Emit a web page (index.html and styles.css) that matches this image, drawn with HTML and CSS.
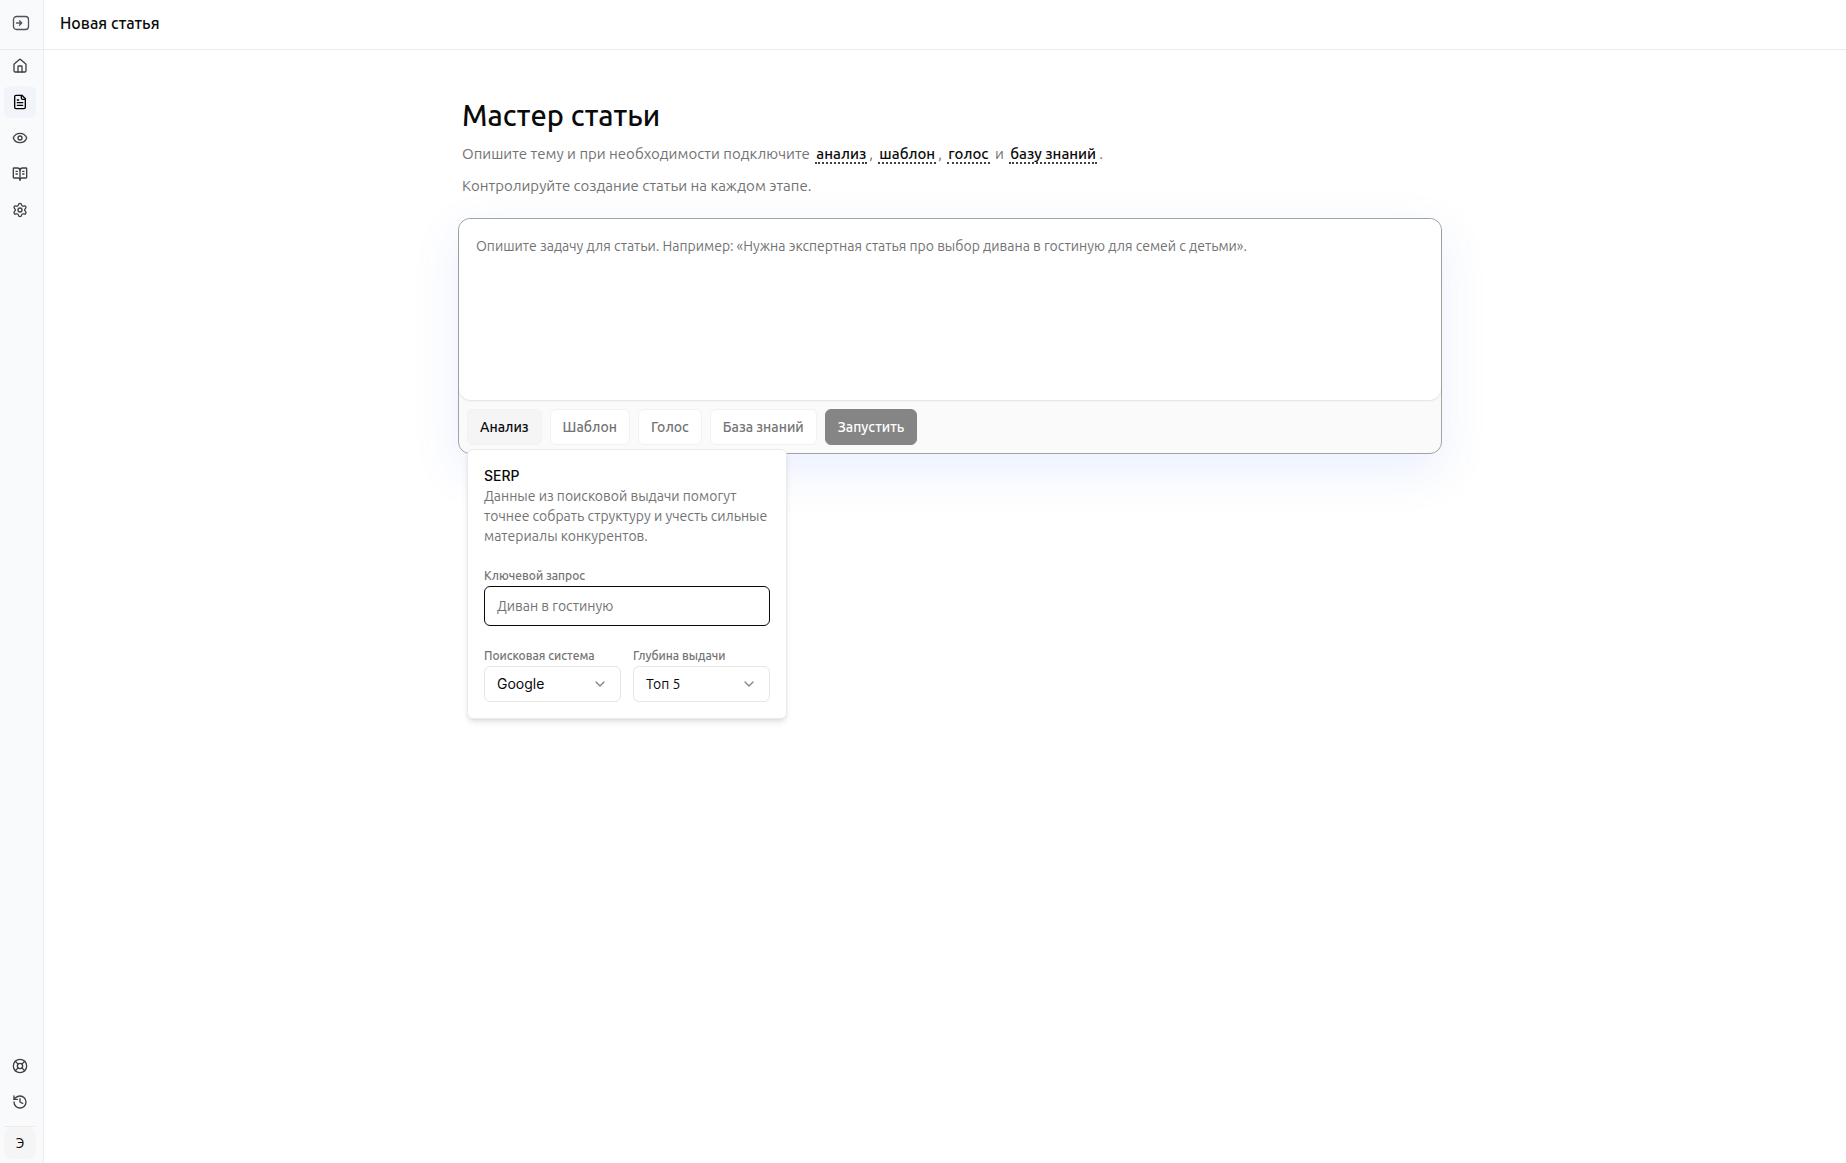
FILE: index.html
```html
<!DOCTYPE html>
<html lang="ru">
<head>
<meta charset="utf-8">
<meta name="viewport" content="width=device-width, initial-scale=1">
<title>Новая статья</title>
<link rel="stylesheet" href="styles.css">
</head>
<body>
<div class="app">
  <aside class="sidebar">
    <div class="sidebar-top">
      <button class="toggle" type="button" aria-label="Развернуть меню">
        <svg width="18" height="16" viewBox="0 0 18 16" stroke-width="1.3"><rect x="1.5" y="1.5" width="15" height="13" rx="3"/><path d="M4.5 8H9.5M7.5 5.8 9.7 8 7.5 10.2"/></svg>
      </button>
    </div>
    <nav class="nav" aria-label="Основное меню">
      <a class="nav-item" href="#" aria-label="Главная"><svg class="icon" viewBox="0 0 24 24"><path d="M15 21v-8a1 1 0 0 0-1-1h-4a1 1 0 0 0-1 1v8"/><path d="M3 10a2 2 0 0 1 .709-1.528l7-5.999a2 2 0 0 1 2.582 0l7 5.999A2 2 0 0 1 21 10v9a2 2 0 0 1-2 2H5a2 2 0 0 1-2-2z"/></svg></a>
      <a class="nav-item active" href="#" aria-label="Статьи" aria-current="page"><svg class="icon" viewBox="0 0 24 24"><path d="M15 2H6a2 2 0 0 0-2 2v16a2 2 0 0 0 2 2h12a2 2 0 0 0 2-2V7Z"/><path d="M14 2v4a2 2 0 0 0 2 2h4M10 9H8M16 13H8M16 17H8"/></svg></a>
      <a class="nav-item" href="#" aria-label="Просмотр"><svg class="icon" viewBox="0 0 24 24"><path d="M2.062 12.348a1 1 0 0 1 0-.696 10.75 10.75 0 0 1 19.876 0 1 1 0 0 1 0 .696 10.75 10.75 0 0 1-19.876 0"/><circle cx="12" cy="12" r="3"/></svg></a>
      <a class="nav-item" href="#" aria-label="База знаний"><svg class="icon" viewBox="0 0 24 24"><path d="M12 7v14M16 12h2M16 8h2M6 12h2M6 8h2"/><path d="M3 18a1 1 0 0 1-1-1V4a1 1 0 0 1 1-1h5a4 4 0 0 1 4 4 4 4 0 0 1 4-4h5a1 1 0 0 1 1 1v13a1 1 0 0 1-1 1h-6a3 3 0 0 0-3 3 3 3 0 0 0-3-3z"/></svg></a>
      <a class="nav-item" href="#" aria-label="Настройки"><svg class="icon" viewBox="0 0 24 24"><path d="M9.671 4.136a2.34 2.34 0 0 1 4.659 0 2.34 2.34 0 0 0 3.319 1.915 2.34 2.34 0 0 1 2.33 4.033 2.34 2.34 0 0 0 0 3.831 2.34 2.34 0 0 1-2.33 4.033 2.34 2.34 0 0 0-3.319 1.915 2.34 2.34 0 0 1-4.659 0 2.34 2.34 0 0 0-3.32-1.915 2.34 2.34 0 0 1-2.33-4.033 2.34 2.34 0 0 0 0-3.831A2.34 2.34 0 0 1 6.35 6.051a2.34 2.34 0 0 0 3.319-1.915"/><circle cx="12" cy="12" r="3"/></svg></a>
    </nav>
    <div class="nav nav-bottom">
      <a class="nav-item" href="#" aria-label="Поддержка"><svg class="icon" viewBox="0 0 24 24"><circle cx="12" cy="12" r="10"/><path d="m4.93 4.93 4.24 4.24M14.83 9.17l4.24-4.24M14.83 14.83l4.24 4.24M9.17 14.83l-4.24 4.24"/><circle cx="12" cy="12" r="4"/></svg></a>
      <a class="nav-item" href="#" aria-label="История"><svg class="icon" viewBox="0 0 24 24"><path d="M3 12a9 9 0 1 0 9-9 9.75 9.75 0 0 0-6.74 2.74L3 8"/><path d="M3 3v5h5M12 7v5l4 2"/></svg></a>
    </div>
    <div class="account"><button class="avatar" type="button">Э</button></div>
  </aside>

  <div class="page">
    <header class="topbar"><span class="topbar-title">Новая статья</span></header>
    <main class="main">
      <div class="wizard">
        <div class="intro">
          <h1>Мастер статьи</h1>
          <p>Опишите тему и при необходимости подключите <a class="term" href="#">анализ</a>, <a class="term" href="#">шаблон</a>, <a class="term" href="#">голос</a> и <a class="term" href="#">базу знаний</a>.</p>
          <p>Контролируйте создание статьи на каждом этапе.</p>
        </div>
        <form class="composer">
          <textarea class="prompt" aria-label="Задача для статьи" placeholder="Опишите задачу для статьи. Например: «Нужна экспертная статья про выбор дивана в гостиную для семей с детьми»."></textarea>
          <div class="actions">
            <div class="menu">
              <button class="chip chip-open" type="button" aria-expanded="true">Анализ</button>
              <section class="popover">
                <div class="popover-head">
                  <h2 class="latin">SERP</h2>
                  <p>Данные из поисковой выдачи помогут точнее собрать структуру и учесть сильные материалы конкурентов.</p>
                </div>
                <div class="field">
                  <label for="query">Ключевой запрос</label>
                  <input class="text-input" id="query" type="text" placeholder="Диван в гостиную">
                </div>
                <div class="field-row">
                  <div class="field">
                    <label for="engine">Поисковая система</label>
                    <div class="select">
                      <select class="latin" id="engine"><option>Google</option></select>
                      <svg class="icon chevron" viewBox="0 0 24 24"><path d="m6 9 6 6 6-6"/></svg>
                    </div>
                  </div>
                  <div class="field">
                    <label for="depth">Глубина выдачи</label>
                    <div class="select">
                      <select id="depth"><option>Топ 5</option></select>
                      <svg class="icon chevron" viewBox="0 0 24 24"><path d="m6 9 6 6 6-6"/></svg>
                    </div>
                  </div>
                </div>
              </section>
            </div>
            <button class="chip" type="button">Шаблон</button>
            <button class="chip" type="button">Голос</button>
            <button class="chip" type="button">База знаний</button>
            <button class="chip chip-run" type="submit" disabled>Запустить</button>
          </div>
        </form>
      </div>
    </main>
  </div>
</div>
</body>
</html>
```
FILE: styles.css
```css
:root {
  --text: #0a0a0a;
  --muted: #737373;
  --line: #e5e5e5;
  --font: Ubuntu, "Noto Sans", sans-serif;
}

* { box-sizing: border-box; }

body {
  margin: 0;
  font-family: var(--font);
  font-size: 14px;
  line-height: 20px;
  color: var(--text);
  background: #fff;
}

h1, h2, p { margin: 0; }

button, input, select, textarea { font: inherit; color: inherit; }

button { cursor: pointer; }

svg {
  display: block;
  fill: none;
  stroke: currentColor;
  stroke-linecap: round;
  stroke-linejoin: round;
}

.icon { width: 16px; height: 16px; stroke-width: 2; }

.latin { font-family: Inter, var(--font); }

.app { display: flex; min-height: 100vh; }

/* Sidebar */
.sidebar {
  position: sticky;
  top: 0;
  display: flex;
  flex-direction: column;
  flex: none;
  width: 44px;
  height: 100vh;
  background: #f8fafc;
  border-right: 1px solid #ebebeb;
}

.sidebar-top {
  display: flex;
  align-items: center;
  height: 50px;
  padding: 0 0 4px 12px;
  border-bottom: 1px solid #ebebeb;
}

.toggle {
  padding: 0;
  border: 0;
  background: none;
  color: #52525b;
}

.nav {
  display: flex;
  flex-direction: column;
  gap: 4px;
  padding: 0 4px;
}

.nav-bottom { margin-top: auto; padding-bottom: 8px; }

.nav-item {
  display: grid;
  place-items: center;
  width: 32px;
  height: 32px;
  border-radius: 6px;
  color: #3f3f46;
}

.nav-item.active { background: #f1f5f9; color: #000; }

.account {
  margin: 0 8px 4px 4px;
  border-top: 1px solid #ebebeb;
}

.avatar {
  display: block;
  width: 32px;
  height: 32px;
  padding: 0;
  border: 0;
  border-radius: 8px;
  background: #f5f5f5;
}

/* Page */
.page { display: flex; flex-direction: column; flex: 1; min-width: 0; }

.topbar {
  height: 50px;
  padding: 13px 16px;
  border-bottom: 1px solid #ebebeb;
}

.topbar-title { font-size: 16px; font-weight: 500; }

.main {
  display: flex;
  justify-content: center;
  padding: 48px 24px 48px 34px;
}

.wizard {
  display: flex;
  flex-direction: column;
  gap: 16px;
  width: 100%;
  max-width: 984px;
}

.intro { padding: 0 4px; }

.intro h1 {
  margin-bottom: 6px;
  font-size: 29px;
  font-weight: 500;
  line-height: 34px;
}

.intro p { font-size: 15px; line-height: 32px; color: var(--muted); }

.term {
  margin: 0 2px;
  padding: 0 1px;
  border-bottom: 2px dotted #404040;
  color: var(--text);
  font-weight: 500;
  text-decoration: none;
}

/* Composer */
.composer {
  border: 1px solid #a3a3a3;
  border-radius: 12px;
  background: #fafafa;
  box-shadow: 0 16px 48px rgba(37, 99, 235, 0.1);
}

.prompt {
  display: block;
  width: 100%;
  height: 181px;
  padding: 17px;
  border: 0;
  border-radius: 12px;
  outline: 0;
  background: #fff;
  box-shadow: 0 1px 2px rgba(0, 0, 0, 0.1);
  resize: none;
}

.prompt::placeholder, .text-input::placeholder { color: var(--muted); opacity: 1; }

.actions {
  display: flex;
  flex-wrap: wrap;
  gap: 8px;
  padding: 9px 8px 8px;
}

.chip {
  height: 36px;
  padding: 0 12px;
  border: 1px solid #f2f2f2;
  border-radius: 6px;
  background: #fff;
  color: var(--muted);
  font-weight: 500;
}

.chip-open { background: #f5f5f5; color: var(--text); }

.chip-run { border-color: #858585; background: #858585; color: #fff; }

/* Popover */
.menu { position: relative; }

.popover {
  position: absolute;
  top: calc(100% + 4px);
  left: 0;
  display: flex;
  flex-direction: column;
  gap: 20px;
  width: 320px;
  padding: 16px;
  border: 1px solid #ebebeb;
  border-radius: 6px;
  background: #fff;
  box-shadow: 0 4px 6px -1px rgba(0, 0, 0, 0.1), 0 2px 4px -2px rgba(0, 0, 0, 0.1);
}

.popover h2 { font-size: 14px; font-weight: 500; line-height: 20px; }

.popover p { color: var(--muted); }

.field { display: flex; flex-direction: column; min-width: 0; }

.field label { font-size: 12px; font-weight: 500; color: var(--muted); }

.field-row { display: grid; grid-template-columns: 1fr 1fr; gap: 12px; }

.text-input {
  width: 100%;
  height: 40px;
  padding: 0 12px;
  border: 1px solid var(--text);
  border-radius: 6px;
  outline: 0;
  background: #fff;
}

.select { display: grid; align-items: center; }

.select select, .chevron { grid-area: 1 / 1; }

.select select {
  width: 100%;
  height: 36px;
  padding: 0 36px 0 12px;
  border: 1px solid var(--line);
  border-radius: 6px;
  background: #fff;
  appearance: none;
}

.chevron {
  justify-self: end;
  margin-right: 13px;
  color: #858585;
  pointer-events: none;
}
```
